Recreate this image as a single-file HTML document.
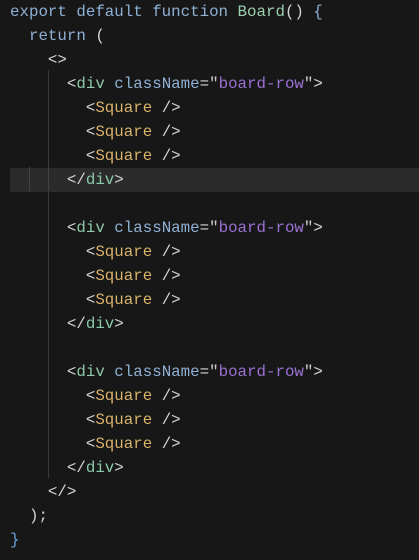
<!DOCTYPE html>
<html><head><style>
html,body{margin:0;padding:0;background:#171717;width:419px;height:560px;overflow:hidden}
.c{position:absolute;left:0;top:0;width:419px}
.l{height:24px;line-height:24px;padding-left:10px;white-space:pre;font-family:"Liberation Mono",monospace;font-size:15.8px;color:#d4d4d4;position:relative}
.hl{background:#2b2b2b;margin-left:10px;padding-left:0}
.k{color:#8fb0d4}.f{color:#9ccfb0}.t{color:#8ccaa8}.a{color:#8fb0d4}.s{color:#9a70d2}.q{color:#d8b26a}.p{color:#cfcfcf}.b{color:#6aa0dc}
.g{position:absolute;left:48px;top:70px;width:1px;height:408px;background:#3a3a3a}
.g2{position:absolute;left:29px;top:167px;width:1px;height:24px;background:#444}
</style></head><body>
<div class="g"></div>
<div class="c">
<div class="l"><span class="k">export default function</span> <span class="f">Board</span>() <span class="k">{</span></div>
<div class="l">  <span class="k">return</span> (</div>
<div class="l">    &lt;&gt;</div>
<div class="l">      &lt;<span class="t">div</span> <span class="a">className</span>=<span class="p">"</span><span class="s">board-row</span><span class="p">"</span>&gt;</div>
<div class="l">        &lt;<span class="q">Square</span> /&gt;</div>
<div class="l">        &lt;<span class="q">Square</span> /&gt;</div>
<div class="l">        &lt;<span class="q">Square</span> /&gt;</div>
<div class="l hl">      &lt;/<span class="t">div</span>&gt;</div>
<div class="l"> </div>
<div class="l">      &lt;<span class="t">div</span> <span class="a">className</span>=<span class="p">"</span><span class="s">board-row</span><span class="p">"</span>&gt;</div>
<div class="l">        &lt;<span class="q">Square</span> /&gt;</div>
<div class="l">        &lt;<span class="q">Square</span> /&gt;</div>
<div class="l">        &lt;<span class="q">Square</span> /&gt;</div>
<div class="l">      &lt;/<span class="t">div</span>&gt;</div>
<div class="l"> </div>
<div class="l">      &lt;<span class="t">div</span> <span class="a">className</span>=<span class="p">"</span><span class="s">board-row</span><span class="p">"</span>&gt;</div>
<div class="l">        &lt;<span class="q">Square</span> /&gt;</div>
<div class="l">        &lt;<span class="q">Square</span> /&gt;</div>
<div class="l">        &lt;<span class="q">Square</span> /&gt;</div>
<div class="l">      &lt;/<span class="t">div</span>&gt;</div>
<div class="l">    &lt;/&gt;</div>
<div class="l">  );</div>
<div class="l"><span class="b">}</span></div>
</div>
<div class="g2"></div>
<div class="g" style="top:167px;height:24px;background:#444"></div>
</body></html>
